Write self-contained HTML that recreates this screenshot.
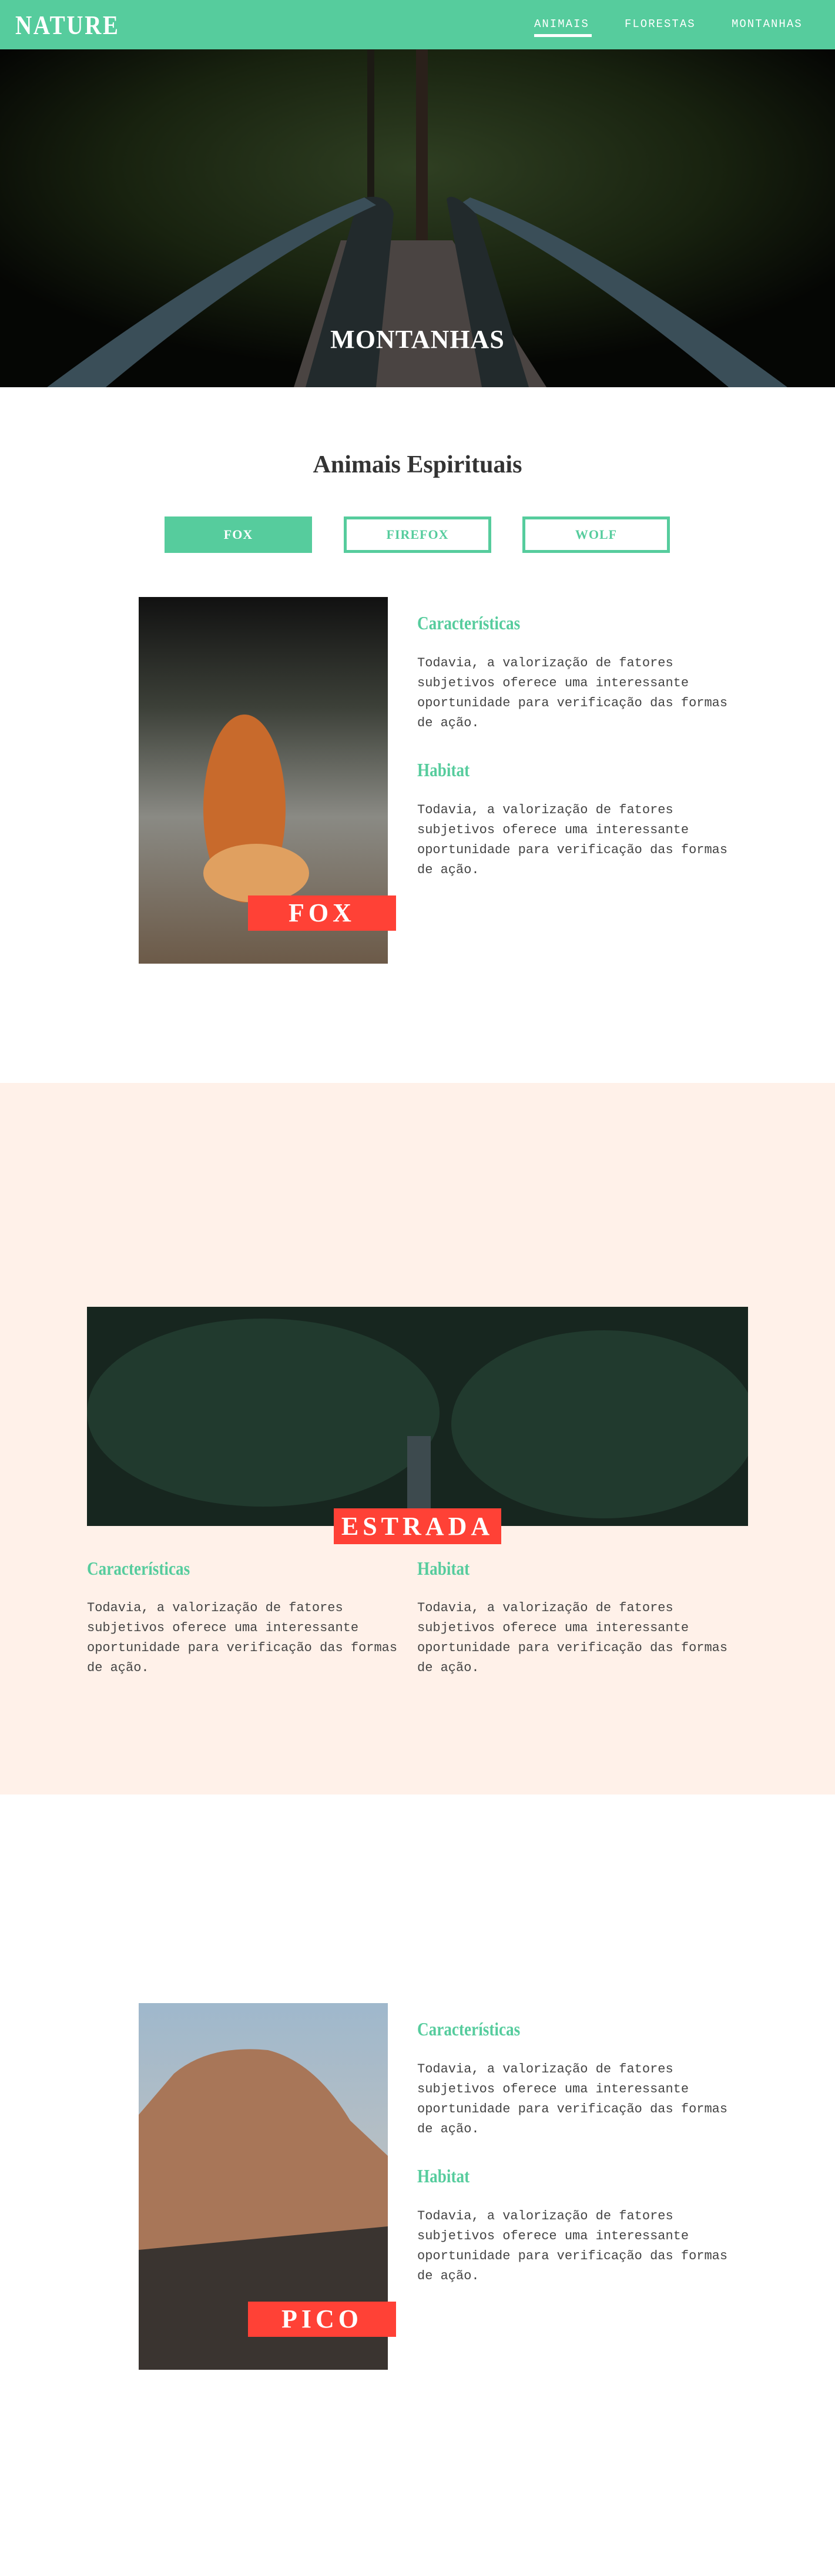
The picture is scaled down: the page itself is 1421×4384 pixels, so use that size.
<!DOCTYPE html>
<html><head><meta charset="utf-8"><style>
*{margin:0;padding:0;box-sizing:border-box}
body{width:1421px;height:4384px;background:#fff;position:relative;overflow:hidden;font-family:"Liberation Mono",monospace;color:#333}
.a{position:absolute}
.serif{font-family:"Liberation Serif",serif;font-weight:bold}
header{position:absolute;left:0;top:0;width:1421px;height:84px;background:#56cc9d}
.logo{left:26px;top:16px;font-size:46px;color:#fff;letter-spacing:3px;transform:scaleX(.85);transform-origin:left}
.nav{top:30px;font-size:19px;color:#fff;letter-spacing:2px}
.h3{font-size:32px;color:#56cc9d;transform:scaleX(.85);transform-origin:left}
.p{font-size:22px;line-height:34px;color:#444;width:560px}
.btn{top:879px;width:251px;height:62px;border:5px solid #56cc9d;color:#56cc9d;font-size:22px;text-align:center;line-height:52px;letter-spacing:1px}
.lab{background:#ff4136;color:#fff;text-align:center;font-size:44px;letter-spacing:7px}
</style></head><body>
<header>
<div class="a serif logo">NATURE</div>
<div class="a nav" style="left:909px">ANIMAIS</div>
<div class="a" style="left:909px;top:58px;width:98px;height:5px;background:#fff"></div>
<div class="a nav" style="left:1063px">FLORESTAS</div>
<div class="a nav" style="left:1245px">MONTANHAS</div>
</header>
<svg class="a" style="left:0;top:84px" width="1421" height="575" viewBox="0 0 1421 575">
<defs><radialGradient id="g" cx="50%" cy="35%" r="60%"><stop offset="0" stop-color="#2f3f22"/><stop offset=".6" stop-color="#18220f"/><stop offset="1" stop-color="#050604"/></radialGradient></defs>
<rect width="1421" height="575" fill="url(#g)"/>
<rect x="708" y="0" width="20" height="330" fill="#2a201a"/>
<rect x="625" y="0" width="12" height="300" fill="#1c1a14"/>
<path d="M580 325 L770 325 L930 575 L500 575 Z" fill="#4a4442"/>
<path d="M610 255 Q660 240 670 280 L640 575 L520 575 Z" fill="#222a2c"/>
<path d="M620 252 Q410 330 80 575 L180 575 Q450 350 640 265 Z" fill="#3a4e58"/>
<path d="M800 252 Q1010 330 1340 575 L1240 575 Q970 350 780 265 Z" fill="#3a4e58"/>
<path d="M760 255 Q770 240 810 280 L900 575 L820 575 Z" fill="#222a2c"/>
</svg>
<div class="a serif" style="left:0;width:1421px;top:552px;text-align:center;font-size:44px;color:#fff;letter-spacing:1px">MONTANHAS</div>

<div class="a serif" style="left:0;width:1421px;top:767px;text-align:center;font-size:42px;color:#333">Animais Espirituais</div>
<div class="a serif btn" style="left:280px;background:#56cc9d;color:#fff">FOX</div>
<div class="a serif btn" style="left:585px">FIREFOX</div>
<div class="a serif btn" style="left:889px">WOLF</div>

<svg class="a" style="left:236px;top:1016px" width="424" height="624"><defs><linearGradient id="f" x1="0" y1="0" x2="0" y2="1"><stop offset="0" stop-color="#111"/><stop offset=".3" stop-color="#3c4038"/><stop offset=".6" stop-color="#8a8a84"/><stop offset="1" stop-color="#6c5a48"/></linearGradient></defs><rect width="424" height="624" fill="url(#f)"/><ellipse cx="180" cy="360" rx="70" ry="160" fill="#c86a2c"/><ellipse cx="200" cy="470" rx="90" ry="50" fill="#e0a060"/></svg>
<div class="a serif lab" style="left:422px;top:1524px;width:252px;height:60px;line-height:60px">FOX</div>
<div class="a serif h3" style="left:710px;top:1042px">Características</div>
<div class="a p" style="left:710px;top:1112px">Todavia, a valorização de fatores subjetivos oferece uma interessante oportunidade para verificação das formas de ação.</div>
<div class="a serif h3" style="left:710px;top:1292px">Habitat</div>
<div class="a p" style="left:710px;top:1362px">Todavia, a valorização de fatores subjetivos oferece uma interessante oportunidade para verificação das formas de ação.</div>

<div class="a" style="left:0;top:1843px;width:1421px;height:1211px;background:#fff1e9"></div>
<svg class="a" style="left:148px;top:2224px" width="1125" height="373"><rect width="1125" height="373" fill="#17261f"/><ellipse cx="300" cy="180" rx="300" ry="160" fill="#213a2e"/><ellipse cx="880" cy="200" rx="260" ry="160" fill="#213a2e"/><rect x="545" y="220" width="40" height="153" fill="#3d4a4e"/></svg>
<div class="a serif lab" style="left:568px;top:2567px;width:285px;height:61px;line-height:61px">ESTRADA</div>
<div class="a serif h3" style="left:148px;top:2651px">Características</div>
<div class="a p" style="left:148px;top:2720px">Todavia, a valorização de fatores subjetivos oferece uma interessante oportunidade para verificação das formas de ação.</div>
<div class="a serif h3" style="left:710px;top:2651px">Habitat</div>
<div class="a p" style="left:710px;top:2720px">Todavia, a valorização de fatores subjetivos oferece uma interessante oportunidade para verificação das formas de ação.</div>

<svg class="a" style="left:236px;top:3409px" width="424" height="624"><defs><linearGradient id="s" x1="0" y1="0" x2="0" y2="1"><stop offset="0" stop-color="#9fb8cc"/><stop offset="1" stop-color="#d8c8b8"/></linearGradient></defs><rect width="424" height="624" fill="url(#s)"/><path d="M0 190 L60 120 Q120 70 220 80 Q300 100 360 200 L424 260 L424 624 L0 624 Z" fill="#a87658"/><path d="M0 420 L424 380 L424 624 L0 624 Z" fill="#3a3430"/></svg>
<div class="a serif lab" style="left:422px;top:3917px;width:252px;height:60px;line-height:60px">PICO</div>
<div class="a serif h3" style="left:710px;top:3435px">Características</div>
<div class="a p" style="left:710px;top:3505px">Todavia, a valorização de fatores subjetivos oferece uma interessante oportunidade para verificação das formas de ação.</div>
<div class="a serif h3" style="left:710px;top:3685px">Habitat</div>
<div class="a p" style="left:710px;top:3755px">Todavia, a valorização de fatores subjetivos oferece uma interessante oportunidade para verificação das formas de ação.</div>
</body></html>
